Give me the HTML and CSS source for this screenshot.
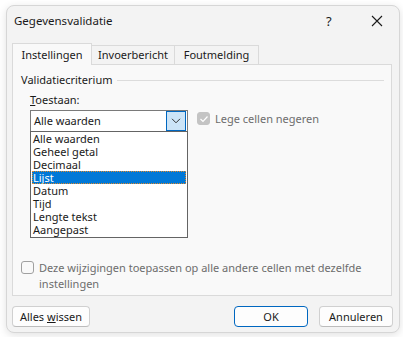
FILE: index.html
```html
<!DOCTYPE html>
<html lang="nl">
<head>
    <meta charset="UTF-8">
    <title>Gegevensvalidatie</title>
    <link rel="stylesheet" href="styles.css">
</head>
<body>
    <div class="dialog">
        <div class="titlebar">
            <span class="title">Gegevensvalidatie</span>
            <span class="help">?</span>
            <span class="close">
                <svg width="12" height="12" viewBox="0 0 12 12"><path d="M1 1 L11 11 M11 1 L1 11" stroke="#1a1a1a" stroke-width="1.1" fill="none"/></svg>
            </span>
        </div>

        <div class="tabs">
            <div class="tab active">Instellingen</div>
            <div class="tab">Invoerbericht</div>
            <div class="tab">Foutmelding</div>
        </div>

        <div class="panel">
            <div class="group-title">
                <span>Validatiecriterium</span>
                <div class="group-line"></div>
            </div>

            <div class="group-body">
                <div class="field-label"><u>T</u>oestaan:</div>
                <div class="field-row">
                    <div class="select">
                        <span class="select-value">Alle waarden</span>
                        <span class="select-btn">
                            <svg width="10" height="6" viewBox="0 0 10 6"><path d="M1 0.8 L5 4.8 L9 0.8" stroke="#333" stroke-width="1" fill="none"/></svg>
                        </span>
                        <ul class="options">
                            <li>Alle waarden</li>
                            <li>Geheel getal</li>
                            <li>Decimaal</li>
                            <li class="selected">Lijst</li>
                            <li>Datum</li>
                            <li>Tijd</li>
                            <li>Lengte tekst</li>
                            <li>Aangepast</li>
                        </ul>
                    </div>
                    <label class="check disabled">
                        <span class="box checked">
                            <svg width="10" height="8" viewBox="0 0 10 8"><path d="M1.5 4 L4 6.5 L8.5 1.5" stroke="#fff" stroke-width="1.2" fill="none"/></svg>
                        </span>
                        Lege cellen negeren
                    </label>
                </div>
            </div>

            <label class="check apply disabled">
                <span class="box"></span>
                <span>Deze wijzigingen toepassen op alle andere cellen met dezelfde instellingen</span>
            </label>
        </div>

        <div class="footer">
            <button class="btn wide">Alles <u>w</u>issen</button>
            <div class="footer-right">
                <button class="btn default">OK</button>
                <button class="btn">Annuleren</button>
            </div>
        </div>
    </div>
</body>
</html>
```

FILE: styles.css
```css
* {
    margin: 0;
    padding: 0;
    box-sizing: border-box;
}

body {
    font-family: 'Noto Sans', 'Segoe UI', sans-serif;
    font-size: 11px;
    line-height: 16px;
    color: #1a1a1a;
    background: #ffffff;
    width: 403px;
    height: 337px;
    overflow: hidden;
}

.dialog {
    margin: 5px 0 0 6px;
    width: 394px;
    height: 328px;
    background: #f3f3f3;
    border: 1px solid #d6d6d6;
    border-radius: 8px;
    box-shadow: 0 2px 8px rgba(0,0,0,0.12);
}

.titlebar {
    height: 30px;
    display: flex;
    align-items: center;
    padding-left: 7px;
    font-size: 11.5px;
}

.title {
    flex: 1;
}

.help {
    width: 12px;
    font-size: 13px;
    margin-right: 33px;
}

.close {
    width: 12px;
    height: 12px;
    margin-right: 16px;
    display: flex;
}

.tabs {
    display: flex;
    align-items: flex-end;
    margin: 6px 0 0 5px;
    height: 22px;
}

.tab {
    height: 19px;
    width: 83px;
    text-align: center;
    line-height: 18px;
    border: 1px solid #dadada;
    border-bottom: none;
    border-left: none;
    background: #f3f3f3;
}

.tab:last-child {
    width: 84px;
}

.tab.active {
    width: 80px;
    height: 22px;
    line-height: 21px;
    border-left: 1px solid #dadada;
    background: #f9f9f9;
    margin-bottom: -1px;
    position: relative;
    z-index: 1;
}

.panel {
    margin-left: 5px;
    width: 380px;
    height: 232px;
    background: #f9f9f9;
    border: 1px solid #dadada;
    position: relative;
}

.group-title {
    display: flex;
    align-items: center;
    gap: 5px;
    margin: 7px 7px 0 8px;
}

.group-line {
    flex: 1;
    height: 1px;
    background: #dcdcdc;
    margin-top: 1px;
}

.group-body {
    padding-left: 17px;
    margin-top: 4px;
}

.field-label {
    height: 18px;
}

.field-row {
    display: flex;
    align-items: flex-start;
}

.select {
    position: relative;
    width: 158px;
    height: 22px;
    background: #ffffff;
    border: 1px solid #7a7a7a;
    display: flex;
    align-items: center;
    padding-left: 3px;
}

.select-value {
    flex: 1;
}

.select-btn {
    width: 20px;
    height: 20px;
    margin-right: 1px;
    background: #cce4f7;
    border: 1px solid #0067c0;
    display: flex;
    align-items: center;
    justify-content: center;
}

.options {
    position: absolute;
    left: -1px;
    top: 20px;
    width: 158px;
    list-style: none;
    background: #ffffff;
    border: 1px solid #646464;
    padding: 0 0 1px 1px;
    z-index: 2;
}

.options li {
    height: 13px;
    line-height: 13px;
    padding-left: 1px;
    margin-right: 1px;
    white-space: nowrap;
}

.options li.selected {
    background: #0078d7;
    color: #ffffff;
    outline: 1px dotted #e08a2c;
    outline-offset: -1px;
}

.check {
    display: flex;
    align-items: flex-start;
    gap: 5px;
}

.check.disabled {
    color: #6d6d6d;
}

.field-row .check {
    margin-left: 9px;
    margin-top: 1px;
}

.box {
    width: 13px;
    height: 13px;
    border: 1px solid #a0a0a0;
    border-radius: 3px;
    background: #f9f9f9;
    display: flex;
    align-items: center;
    justify-content: center;
    flex-shrink: 0;
    margin-top: 1px;
}

.box.checked {
    background: #c4c4c4;
    border-color: #c4c4c4;
}

.check.apply {
    position: absolute;
    left: 8px;
    top: 195px;
    width: 350px;
}

.footer {
    display: flex;
    justify-content: space-between;
    margin: 10px 6px 0 5px;
}

.footer-right {
    display: flex;
    gap: 11px;
}

.btn {
    font-family: inherit;
    font-size: 11px;
    color: #1a1a1a;
    height: 21px;
    width: 74px;
    background: #fdfdfd;
    border: 1px solid #d0d0d0;
    border-bottom-color: #bcbcbc;
    border-radius: 4px;
}

.btn.wide {
    width: 78px;
}

.btn.default {
    border: 1px solid #0067c0;
}
```
